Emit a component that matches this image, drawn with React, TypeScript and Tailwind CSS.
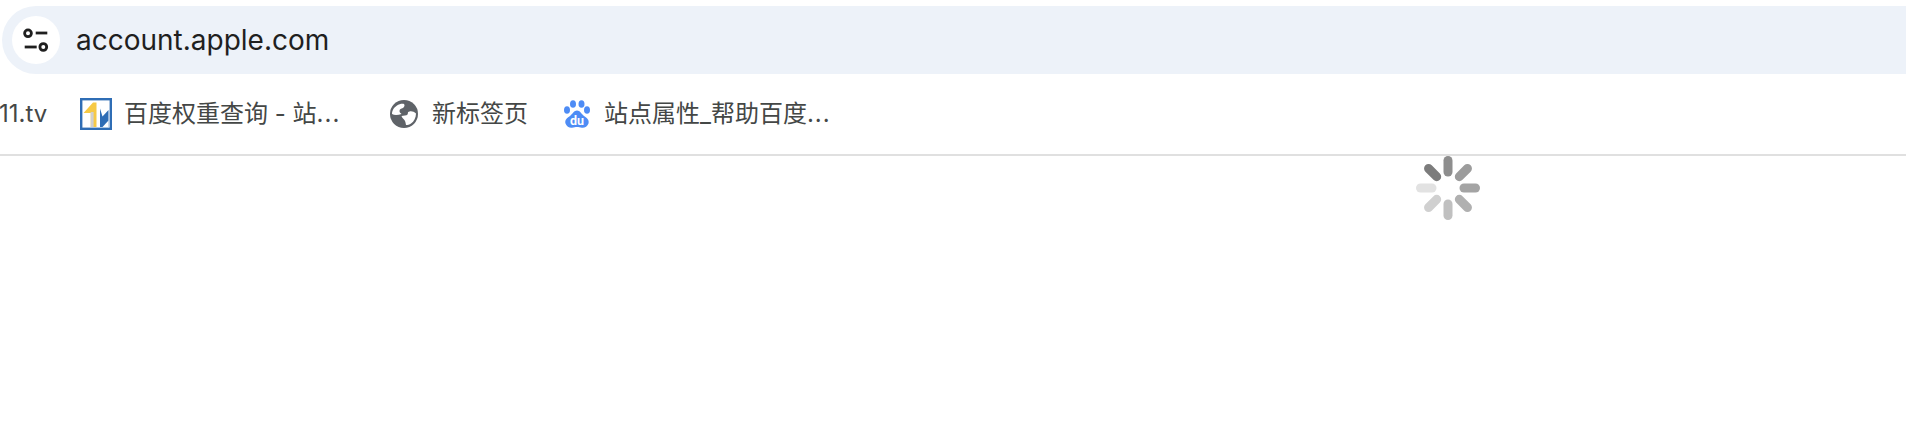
function TuneIcon() {
  return (
    <svg width="26" height="26" viewBox="0 0 26 26" fill="none" stroke="#1f1f1f" strokeWidth="2.8">
      <circle cx="5" cy="6.300" r="3.400" />
      <path d="M12.700 6h11.600" />
      <path d="M1.700 20h12" />
      <circle cx="20.300" cy="20" r="3.400" />
    </svg>
  );
}

function SiteLogo() {
  return (
    <svg width="32" height="32" viewBox="0 0 32 32">
      <rect x="1.200" y="1.200" width="29.600" height="29.600" fill="#fff" stroke="#2f6db5" strokeWidth="2.400" />
      <path d="M3.500 15L13 4.500h3.500V29h-5.800V15z" fill="#f6c945" />
      <rect x="10.700" y="14" width="2.900" height="15" fill="#cfcfcf" />
      <path d="M20 10.500l2.500 8L28.500 12V29h-8.500z" fill="#2f6db5" />
      <path d="M22.500 29l6-6.500V29z" fill="#fff" />
    </svg>
  );
}

function GlobeIcon() {
  return (
    <svg width="28" height="28" viewBox="0 0 28 28">
      <circle cx="14" cy="14" r="14" fill="#5f6368" />
      <path d="M2 14c0-4 2.500-7 5-8.500 2-1.300 5-2 7-1.500 1 1 .5 3-1 4-2 .7-3.500 1-3.500 3 0 1.500 1 2 2 3-3 1-7 1.500-9.500 0z" fill="#fff" />
      <path d="M11.500 16c2-.7 5-.3 6-1.500 1-1.500-.5-2.500 2-3 2-.5 4.500 0 6.500 2 0 4-2 8-5 10-1.500 1-3.500 1.500-5 1.500-.5-2-.5-4-2-5.500-1-1-2-2-2.500-3.500z" fill="#fff" />
    </svg>
  );
}

function PawIcon() {
  return (
    <svg width="26" height="28" viewBox="0 0 26 28" fill="#4e8cf5">
      <ellipse cx="3" cy="10" rx="3" ry="3.800" />
      <ellipse cx="9" cy="4" rx="3" ry="3.800" />
      <ellipse cx="17.500" cy="4" rx="3" ry="3.800" />
      <ellipse cx="23" cy="10" rx="3" ry="3.800" />
      <path d="M13 10.500c3 0 4 3 7 5.500 3 2 5.500 4 4.500 7.500-1 3-4 4.500-6.500 4.200-2-.3-3.500-.7-5-.7s-3 .4-5 .7c-2.500.3-5.500-1.200-6.500-4.200C.5 20 3 18 6 16c3-2.500 4-5.500 7-5.500z" />
      <text x="13" y="25" textAnchor="middle" fontSize="12.500" fontWeight="700" fill="#fff" fontFamily="Roboto, sans-serif">du</text>
    </svg>
  );
}

function Spinner() {
  const spokes = [
    { a: 0, c: "#8e8e8e" },
    { a: 45, c: "#9c9c9c" },
    { a: 90, c: "#a4a4a4" },
    { a: 135, c: "#b0b0b0" },
    { a: 180, c: "#c0c0c0" },
    { a: 225, c: "#d0d0d0" },
    { a: 270, c: "#e2e2e2" },
    { a: 315, c: "#7c7c7c" },
  ];
  return (
    <svg className="absolute left-[1416px] top-[156px]" width="64" height="64" viewBox="0 0 64 64">
      {spokes.map((s) => (
        <line
          key={s.a}
          x1="32"
          y1="16"
          x2="32"
          y2="4.500"
          stroke={s.c}
          strokeWidth="9"
          strokeLinecap="round"
          transform={`rotate(${s.a} 32 32)`}
        />
      ))}
    </svg>
  );
}

export default function App() {
  return (
    <div className="relative h-[436px] w-full overflow-hidden bg-white font-['Inter','Noto_Sans_CJK_SC',sans-serif]">
      <div className="pt-[6px] pl-[2px]">
        <div className="flex h-[68px] items-center rounded-l-[34px] bg-[#edf2f9] pl-[10px]">
          <div className="flex h-[48px] w-[48px] items-center justify-center rounded-full bg-white">
            <TuneIcon />
          </div>
          <span className="ml-[16px] text-[28px] leading-none text-[#1f1f1f]">account.apple.com</span>
        </div>
      </div>
      <div className="box-content flex h-[80px] items-center border-b-2 border-[#e0e0e0] text-[24px] text-[#444746]">
        <div className="w-[80px] shrink-0">
          <span className="-ml-px block whitespace-nowrap">11.tv</span>
        </div>
        <div className="flex w-[310px] shrink-0 items-center gap-[12px]">
          <SiteLogo />
          <span className="whitespace-nowrap">百度权重查询 - 站<span className="tracking-[1px]">...</span></span>
        </div>
        <div className="flex w-[174px] shrink-0 items-center gap-[14px]">
          <GlobeIcon />
          <span className="whitespace-nowrap">新标签页</span>
        </div>
        <div className="flex items-center gap-[14px]">
          <PawIcon />
          <span className="whitespace-nowrap">站点属性_帮助百度<span className="tracking-[1px]">...</span></span>
        </div>
      </div>
      <Spinner />
    </div>
  );
}
